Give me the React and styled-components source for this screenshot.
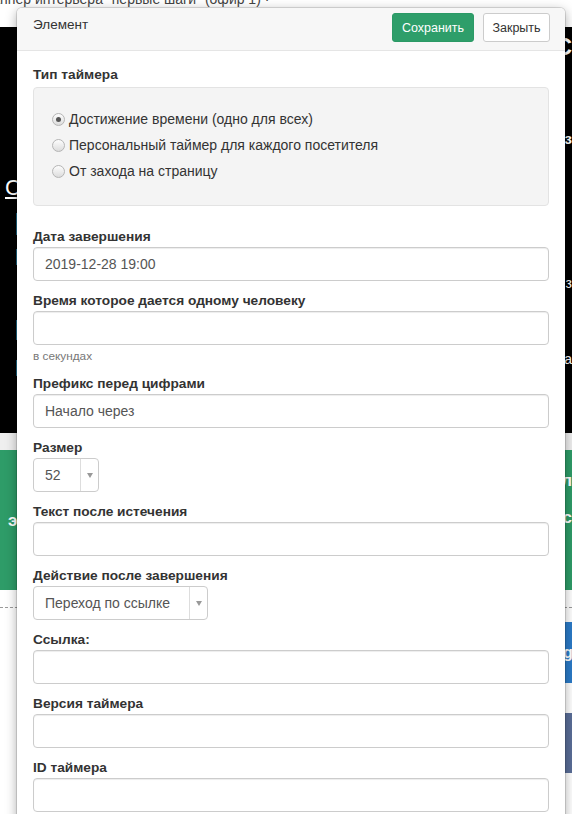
import React from "react";
import styled, { createGlobalStyle } from "styled-components";

const GlobalStyle = createGlobalStyle`
  html, body {
    margin: 0;
    padding: 0;
  }
  body {
    width: 572px;
    height: 814px;
    overflow: hidden;
    background: #fff;
    color: #333;
    font-family: "Liberation Sans", Arial, sans-serif;
    font-size: 14px;
  }
`;

const Page = styled.div`
  position: relative;
  width: 572px;
  height: 814px;
  overflow: hidden;
`;

// ---- page behind the modal ----
const TopStrip = styled.div`
  height: 27px;
  overflow: hidden;
  white-space: nowrap;
  span {
    display: block;
    margin: -9px 0 0 -17px;
    line-height: 16px;
    color: #444;
    font-size: 14px;
  }
`;

const Band = styled.div`
  display: flex;
  justify-content: space-between;
  height: ${(p) => p.$h}px;
  background: ${(p) => p.$bg || "#fff"};
  border-bottom: ${(p) => (p.$dashed ? "1px dashed #9a9a9a" : "none")};
`;

const Side = styled.div`
  display: flex;
  flex-direction: column;
  align-items: ${(p) => (p.$right ? "flex-end" : "flex-start")};
  width: ${(p) => p.$w || 20}px;
  overflow: hidden;
`;

const Glyph = styled.span`
  display: block;
  margin-top: ${(p) => p.$top || 0}px;
  margin-left: ${(p) => p.$left || 0}px;
  color: #fff;
  font-size: ${(p) => p.$size || 16}px;
  font-weight: ${(p) => (p.$bold ? "bold" : "normal")};
  line-height: 1;
  text-decoration: ${(p) => (p.$underline ? "underline" : "none")};
  white-space: nowrap;
`;

const Tick = styled.span`
  display: block;
  width: 2px;
  height: ${(p) => p.$h}px;
  margin-top: ${(p) => p.$top}px;
  margin-left: 16px;
  background: #1d6f8f;
`;

const Block = styled.div`
  width: 9px;
  height: ${(p) => p.$h}px;
  margin-top: ${(p) => p.$top}px;
  background: ${(p) => p.$bg};
  color: #fff;
  font-size: 16px;
  font-weight: bold;
  line-height: ${(p) => p.$h}px;
  overflow: hidden;
  white-space: nowrap;
`;

// ---- modal ----
const Modal = styled.div`
  position: absolute;
  top: 8px;
  left: 17px;
  width: 548px;
  height: 840px;
  background: #fff;
  border-radius: 5px 5px 0 0;
  box-shadow: 0 0 0 1px rgba(0, 0, 0, 0.12), 0 3px 12px rgba(0, 0, 0, 0.35);
  overflow: hidden;
`;

const Header = styled.div`
  display: flex;
  align-items: flex-start;
  height: 42px;
  padding: 0 15px 0 16px;
  background: #f7f7f7;
  border-bottom: 1px solid #e5e5e5;
`;

const Title = styled.div`
  flex: 1;
  padding-top: 9px;
  line-height: 16px;
  font-size: 13.5px;
  color: #333;
`;

const Button = styled.button`
  margin-top: 5px;
  margin-left: ${(p) => (p.$primary ? 0 : 9)}px;
  height: 29px;
  width: ${(p) => p.$w}px;
  padding: 0;
  border: 1px solid ${(p) => (p.$primary ? "#2b9a66" : "#ccc")};
  border-radius: 3px;
  background: ${(p) => (p.$primary ? "#2e9e6a" : "#fff")};
  color: ${(p) => (p.$primary ? "#fff" : "#333")};
  font-family: "Liberation Sans", Arial, sans-serif;
  font-size: 12.5px;
`;

const Body = styled.div`
  padding: 14px 16px 0;
`;

const Group = styled.div`
  margin-bottom: ${(p) => p.$mb || 10}px;
`;

const Label = styled.label`
  display: block;
  font-weight: bold;
  font-size: 13.7px;
  line-height: 20px;
  color: #333;
`;

const Well = styled.div`
  margin-top: 2px;
  padding: 18px 19px 21px 18px;
  background: #f4f4f4;
  border: 1px solid #e3e3e3;
  border-radius: 4px;
`;

const RadioRow = styled.div`
  display: flex;
  align-items: center;
  gap: 4px;
  height: 26px;
`;

const RadioDot = styled.span`
  position: relative;
  width: 11px;
  height: 11px;
  border: 1px solid #b5b5b5;
  border-radius: 50%;
  background: linear-gradient(#fdfdfd, #dcdcdc);
  &::after {
    content: "";
    display: ${(p) => (p.$checked ? "block" : "none")};
    position: absolute;
    left: 3px;
    top: 3px;
    width: 5px;
    height: 5px;
    border-radius: 50%;
    background: #555;
  }
`;

const Input = styled.input`
  display: block;
  box-sizing: border-box;
  width: 100%;
  height: 34px;
  padding: 6px 11px;
  border: 1px solid #ccc;
  border-radius: 4px;
  box-shadow: inset 0 1px 1px rgba(0, 0, 0, 0.075);
  background: #fff;
  color: #555;
  font-family: "Liberation Sans", Arial, sans-serif;
  font-size: 14px;
  outline: none;
`;

const Help = styled.div`
  margin-top: 4px;
  font-size: 11.8px;
  line-height: 15px;
  color: #777;
`;

const Select = styled.div`
  display: flex;
  box-sizing: border-box;
  width: ${(p) => p.$w}px;
  height: 34px;
  border: 1px solid #ccc;
  border-radius: 4px;
  color: #555;
`;

const SelectValue = styled.div`
  flex: 1;
  padding-left: 11px;
  line-height: 32px;
  white-space: nowrap;
`;

const Caret = styled.div`
  display: flex;
  align-items: center;
  justify-content: center;
  width: 17px;
  border-left: 1px solid #ddd;
  &::before {
    content: "";
    border-left: 3px solid transparent;
    border-right: 3px solid transparent;
    border-top: 5px solid #999;
  }
`;

const radios = [
  { text: "Достижение времени (одно для всех)", checked: true },
  { text: "Персональный таймер для каждого посетителя" },
  { text: "От захода на страницу" },
];

const Field = ({ label, value = "", help }) => (
  <Group>
    <Label>{label}</Label>
    <Input defaultValue={value} readOnly />
    {help && <Help>{help}</Help>}
  </Group>
);

const SelectField = ({ label, value, width }) => (
  <Group>
    <Label>{label}</Label>
    <Select $w={width}>
      <SelectValue>{value}</SelectValue>
      <Caret />
    </Select>
  </Group>
);

export default function App() {
  return (
    <Page>
      <GlobalStyle />

      <TopStrip>
        <span>Баннер интервера "первые шаги" (офир 1) ·</span>
      </TopStrip>
      <Band $h={406} $bg="#000">
        <Side>
          <Glyph $top={150} $left={5} $size={22} $underline>
            С
          </Glyph>
          <Tick $top={14} $h={22} />
          <Tick $top={14} $h={16} />
          <Tick $top={55} $h={20} />
          <Tick $top={20} $h={16} />
        </Side>
        <Side $right $w={8}>
          <Glyph $top={8} $left={2} $size={24} $bold>
            С
          </Glyph>
          <Glyph $top={72} $left={0} $size={15} $bold>
            з
          </Glyph>
          <Glyph $top={130} $left={1} $size={14}>
            з
          </Glyph>
          <Glyph $top={62} $left={1} $size={14}>
            а
          </Glyph>
        </Side>
      </Band>
      <Band $h={17} $bg="#efefef" />
      <Band $h={140} $bg="#2e9c68">
        <Side>
          <Glyph $top={62} $left={8} $size={17} $bold>
            э
          </Glyph>
        </Side>
        <Side $right $w={8}>
          <Glyph $top={22} $left={1} $size={17} $bold>
            л
          </Glyph>
          <Glyph $top={20} $left={1} $size={17} $bold>
            с
          </Glyph>
        </Side>
      </Band>
      <Band $h={17} $dashed />
      <Band $h={206}>
        <Side />
        <Side $right $w={9}>
          <Block $top={14} $h={61} $bg="#2b7bc8">
            g
          </Block>
          <Block $top={30} $h={60} $bg="#5a6e98" />
        </Side>
      </Band>

      <Modal>
        <Header>
          <Title>Элемент</Title>
          <Button $primary $w={82}>
            Сохранить
          </Button>
          <Button $w={67}>Закрыть</Button>
        </Header>
        <Body>
          <Group $mb={21}>
            <Label>Тип таймера</Label>
            <Well>
              {radios.map((r) => (
                <RadioRow key={r.text}>
                  <RadioDot $checked={r.checked} />
                  {r.text}
                </RadioRow>
              ))}
            </Well>
          </Group>
          <Field label="Дата завершения" value="2019-12-28 19:00" />
          <Field label="Время которое дается одному человеку" help="в секундах" />
          <Field label="Префикс перед цифрами" value="Начало через" />
          <SelectField label="Размер" value="52" width={66} />
          <Field label="Текст после истечения" />
          <SelectField label="Действие после завершения" value="Переход по ссылке" width={175} />
          <Field label="Ссылка:" />
          <Field label="Версия таймера" />
          <Field label="ID таймера" />
        </Body>
      </Modal>
    </Page>
  );
}
